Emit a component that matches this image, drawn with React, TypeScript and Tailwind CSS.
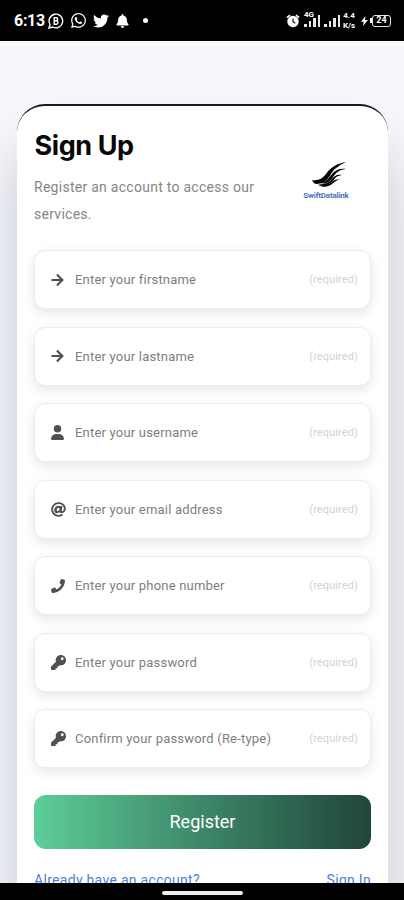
import type { ReactNode } from "react";
import { FaArrowRight, FaAt, FaBell, FaKey, FaPhone, FaTwitter, FaWhatsapp } from "react-icons/fa";
import { FaUser } from "react-icons/fa6";

const fields: { icon: ReactNode; label: string }[] = [
  { icon: <ArrowIcon />, label: "Enter your firstname" },
  { icon: <ArrowIcon />, label: "Enter your lastname" },
  { icon: <FaUser className="h-[15px] w-[13px]" />, label: "Enter your username" },
  { icon: <FaAt className="h-[15px] w-[15px]" />, label: "Enter your email address" },
  { icon: <FaPhone className="h-[14px] w-[14px]" />, label: "Enter your phone number" },
  { icon: <FaKey className="h-[15px] w-[15px]" />, label: "Enter your password" },
  { icon: <FaKey className="h-[15px] w-[15px]" />, label: "Confirm your password (Re-type)" },
];

function ArrowIcon() {
  return <FaArrowRight className="h-[14px] w-[13px]" />;
}

function BusinessChat() {
  return (
    <svg viewBox="0 0 16 16" className="h-4 w-4" fill="none" stroke="white">
      <path d="M1 15l1-3.600A6.800 6.800 0 1 1 4.700 14z" strokeWidth="1.400" />
      <path d="M6.200 4.700v6.600h2a1.750 1.750 0 0 0 0-3.500h-2h1.900a1.550 1.550 0 0 0 0-3.100z" strokeWidth="1.400" />
    </svg>
  );
}

function AlarmIcon() {
  return (
    <svg viewBox="0 0 14 14" className="h-[14px] w-[14px]">
      <circle cx="7" cy="7.500" r="5.700" fill="white" />
      <path d="M1 3.700 4 1.200M13 3.700 10 1.200" stroke="white" strokeWidth="1.600" />
      <path d="M7 4.500v3.300l2.300 1.400" stroke="black" strokeWidth="1.100" fill="none" />
    </svg>
  );
}

function Signal({ tag }: { tag?: string }) {
  return (
    <div className="relative h-[12px] w-[16px]">
      <div className="flex h-full items-end gap-[2px]">
        <i className="h-[3px] w-[2.500px] bg-[#e8e8e8]" />
        <i className="h-[6px] w-[2.500px] bg-[#e8e8e8]" />
        <i className="h-[9px] w-[2.500px] bg-[#e8e8e8]" />
        <i className="h-[12px] w-[2.500px] bg-[#e8e8e8]" />
      </div>
      {tag && (
        <span className="absolute -top-[4px] left-0 text-[8px] leading-[8px] font-bold text-white">{tag}</span>
      )}
    </div>
  );
}

function StatusBar() {
  return (
    <header className="flex h-[41px] shrink-0 items-center bg-black pr-[13px] pl-[14px] text-white">
      <span className="w-[34px] text-[16px] leading-5 font-bold tracking-[-0.300px]">6:13</span>
      <div className="flex items-center">
        <BusinessChat />
        <FaWhatsapp className="ml-[6px] h-[17px] w-[17px]" />
        <FaTwitter className="ml-[6px] h-[16px] w-[16px]" />
        <FaBell className="ml-[7px] h-[14px] w-[13px]" />
        <i className="ml-[14px] h-[5px] w-[5px] rounded-full bg-white" />
      </div>
      <div className="ml-auto flex items-center">
        <AlarmIcon />
        <div className="ml-[4px]"><Signal tag="4G" /></div>
        <div className="ml-[4px]"><Signal /></div>
        <div className="ml-[1px] w-[16px] text-center text-[8px] leading-[10px] font-bold">
          <div>4.4</div>
          <div>K/s</div>
        </div>
        <svg viewBox="0 0 7 10" className="ml-[4px] h-[10px] w-[7px]" fill="white"><path d="M4.500 0 0 5.700h2.700L1.900 10 7 4H4z" /></svg>
        <i className="ml-[2px] h-[5px] w-[2px] bg-white" />
        <div className="flex h-[12px] w-[19px] items-center justify-center rounded-[3px] border-[1.500px] border-[#e5e5e5] text-[9px] leading-[9px] font-bold">24</div>
      </div>
    </header>
  );
}

function Logo() {
  return (
    <div className="mt-[33px] mr-[21px] flex w-[48px] flex-col items-center">
      <svg viewBox="0 0 48 27" className="h-[27px] w-[48px]" fill="black">
        <path d="M10 19c6 1 10-1 14-6C29 6 34 3 44 1c-8 4-12 7-15 12-4 7-9 10-15 10q-3-1-4-4z" />
        <path d="M19 22c7-2 8-6 12-10 3-3 7-5 13-4-8 1-10 4-13 8-3 4-7 8-12 6z" />
        <path d="M16 23c6 1 10-1 13-4 3-4 6-6 11-5-6 1-7 3-9 6-4 4-9 6-15 3z" />
        <path d="M16 24c7 1 11-1 14-3 2-2 4-3 8-2-4 0-5 2-8 4-4 3-9 4-14 1z" />
      </svg>
      <span className="mt-[3px] text-[8px] leading-[9px] font-bold tracking-[-0.200px] whitespace-nowrap text-[#4c6fc0]">SwiftDatalink</span>
    </div>
  );
}

export default function App() {
  return (
    <div className="flex h-[900px] w-[404px] flex-col overflow-hidden bg-[#f7f8fc] font-[Roboto,sans-serif]">
      <StatusBar />
      <main className="min-h-0 flex-1 overflow-hidden px-[17px] pt-[63px]">
        <div className="h-[860px] w-[371px] rounded-[28px] border-t-2 border-[#18191d] bg-white px-[17px] shadow-[0_45px_60px_0_rgba(50,54,85,0.25)]">
          <div className="flex h-[144px] justify-between pt-[22px]">
            <div>
              <h1 className="pl-[0.500px] font-[Inter,sans-serif] text-[27px] leading-[36px] font-bold tracking-[-0.400px] text-[#080808]">Sign Up</h1>
              <p className="mt-[9.500px] w-[235px] text-[14px] leading-[27px] tracking-[0.270px] text-[#858585]">
                Register an account to access our services.
              </p>
            </div>
            <Logo />
          </div>
          <div className="flex flex-col gap-[17.500px]">
            {fields.map(({ icon, label }) => (
              <div
                key={label}
                className="flex h-[59px] items-center rounded-[11px] border border-[#ececec] bg-white pr-[12px] pl-[16px] shadow-[0_4px_12px_rgba(0,0,0,0.100)]"
              >
                <span className="flex w-[24px] text-[#505050]">{icon}</span>
                <span className="mt-[1px] text-[13px] tracking-[0.200px] text-[#7b7e81]">{label}</span>
                <span className="mt-[2px] ml-auto text-[11px] tracking-[0.100px] text-[#d2d2d2]">(required)</span>
              </div>
            ))}
          </div>
          <button className="mt-[27px] flex h-[54px] w-full items-center justify-center rounded-[12px] bg-linear-to-r from-[#5dce99] to-[#20463a] pb-[1px] text-[18px] text-white">
            Register
          </button>
          <div className="mt-[21px] flex justify-between text-[14px] leading-[20px] tracking-[0.300px] text-[#4b7fe0]">
            <a>Already have an account?</a>
            <a>Sign In</a>
          </div>
        </div>
      </main>
      <footer className="z-10 flex h-[17px] shrink-0 justify-center bg-black pt-[8px]">
        <div className="h-[4px] w-[81px] rounded-full bg-[#eee]" />
      </footer>
    </div>
  );
}
